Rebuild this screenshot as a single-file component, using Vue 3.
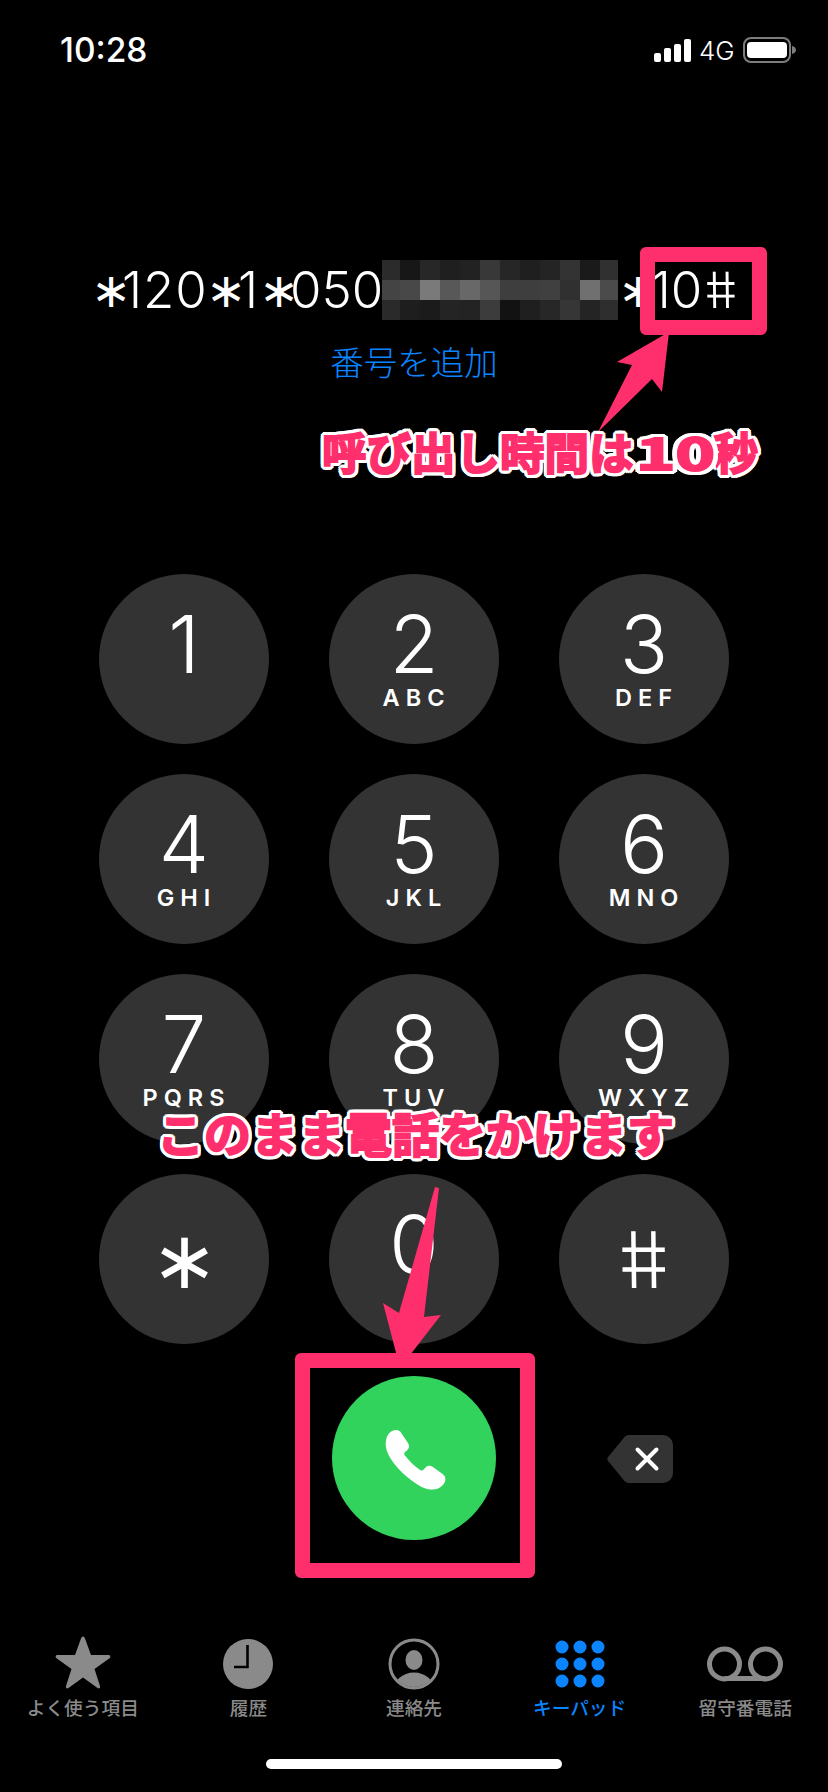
<script setup>
const keys = [
  { d: '1', l: '' }, { d: '2', l: 'ABC' }, { d: '3', l: 'DEF' },
  { d: '4', l: 'GHI' }, { d: '5', l: 'JKL' }, { d: '6', l: 'MNO' },
  { d: '7', l: 'PQRS' }, { d: '8', l: 'TUV' }, { d: '9', l: 'WXYZ' },
]
const mosaic = [
  0x2b, 0x17, 0x27, 0x1f, 0x22, 0x38, 0x26, 0x1f, 0x24, 0x33, 0x1a, 0x30,
  0x44, 0x48, 0x7a, 0x58, 0x68, 0x56, 0x3e, 0x3e, 0x40, 0x30, 0x70, 0x4b,
  0x2a, 0x1e, 0x1b, 0x24, 0x23, 0x3c, 0x12, 0x1f, 0x27, 0x36, 0x24, 0x2e,
].map((v) => `rgb(${v},${v},${v})`)
const dots = []
for (const y of [8, 25, 42]) for (const x of [8, 26, 44]) dots.push({ x, y })
</script>

<template>
  <div class="phone">
    <header class="status">
      <span class="time">10:28</span>
      <div class="status-right">
        <div class="signal">
          <i class="b1"></i><i class="b2"></i><i class="b3"></i><i class="b4"></i>
        </div>
        <span class="net">4G</span>
        <svg class="battery" width="54" height="26" viewBox="0 0 54 26">
          <rect x="1" y="1" width="46" height="24" rx="7" fill="none" stroke="#7d7d7d" stroke-width="2" />
          <rect x="4" y="5" width="40" height="16" rx="4" fill="#fff" />
          <path d="M49 9c2.500 .6 4 2.200 4 4s-1.500 3.400-4 4z" fill="#7d7d7d" />
        </svg>
      </div>
    </header>

    <section class="dial">
      <div class="number">
        <span class="ast">∗</span><span class="run r120">120</span><span class="ast">∗</span><span class="run r1">1</span><span class="ast">∗</span><span class="run r050">050</span>
        <div class="mosaic">
          <i v-for="(c, i) in mosaic" :key="i" :style="{ background: c }"></i>
        </div>
        <span class="ast">∗</span><span class="run r10">10</span><span class="hash">#</span>
      </div>
      <div class="add">番号を追加</div>
    </section>

    <section class="pad">
      <button v-for="k in keys" :key="k.d" class="key">
        <span class="digit">{{ k.d }}</span>
        <span class="letters">{{ k.l }}</span>
      </button>
      <button class="key sym"><span class="sym-ast">∗</span></button>
      <button class="key">
        <span class="digit">0</span>
        <span class="letters"></span>
      </button>
      <button class="key sym"><span class="sym-hash">#</span></button>

      <div class="cell"></div>
      <div class="cell">
        <div class="call">
          <svg width="67" height="67" viewBox="300 250 200 200">
            <path fill="#fff" d="M316 290C322 268 345 258 358 270L380 303C386 312 384 320 378 325L370 332C368 336 370 340 374 344C385 358 400 373 415 383C420 387 424 386 428 382L436 374C442 370 450 372 456 376L484 396C496 405 494 420 484 430C470 446 445 446 420 434C385 416 340 375 322 338C314 322 312 305 316 290Z" />
          </svg>
        </div>
      </div>
      <div class="cell del-cell">
        <svg width="66" height="48" viewBox="0 0 66 48">
          <path fill="#333" d="M22 0H56a10 10 0 0 1 10 10V38a10 10 0 0 1-10 10H22a6 6 0 0 1-4.500-2L1.500 26.500a3.500 3.500 0 0 1 0-5L17.500 2a6 6 0 0 1 4.500-2Z" />
          <path d="M30.500 14.500L49.500 33.500M49.500 14.500L30.500 33.500" stroke="#fff" stroke-width="4" stroke-linecap="round" />
        </svg>
      </div>
    </section>

    <nav class="tabs">
      <div class="tab">
        <svg width="58" height="54" viewBox="0 0 58 54">
          <path fill="#8a8a8a" d="M29 0.500C30 0.500 30.700 1.500 31 2.500L37 19H54.500C56.500 19 57 21 55.500 22.200L40.500 33L46 50C46.600 52 45 53 43.500 52L29 41.500L14.500 52C13 53 11.400 52 12 50L17.500 33L2.500 22.200C1 21 1.500 19 3.500 19H21L27 2.500C27.300 1.500 28 .5 29 .5Z" />
        </svg>
        <span>よく使う項目</span>
      </div>
      <div class="tab">
        <svg width="58" height="54" viewBox="0 0 58 54">
          <circle cx="29" cy="28" r="25" fill="#8a8a8a" />
          <path d="M28.500 9V31H15" fill="none" stroke="#000" stroke-width="2.600" />
        </svg>
        <span>履歴</span>
      </div>
      <div class="tab">
        <svg width="58" height="54" viewBox="0 0 58 54">
          <defs><clipPath id="ring"><circle cx="29" cy="28" r="23" /></clipPath></defs>
          <circle cx="29" cy="28" r="24" fill="none" stroke="#8a8a8a" stroke-width="3" />
          <ellipse cx="29" cy="24" rx="8.500" ry="10" fill="#8a8a8a" />
          <ellipse cx="29" cy="55" rx="21" ry="18.500" fill="#8a8a8a" clip-path="url(#ring)" />
        </svg>
        <span>連絡先</span>
      </div>
      <div class="tab active">
        <svg width="58" height="54" viewBox="0 0 52 54" class="grid-ic">
          <circle v-for="(p, i) in dots" :key="i" :cx="p.x" :cy="p.y + 3" r="6.500" fill="#0a84ff" />
        </svg>
        <span>キーパッド</span>
      </div>
      <div class="tab">
        <svg width="78" height="54" viewBox="0 0 78 54">
          <path d="M18.500 42.500H59.500" stroke="#8a8a8a" stroke-width="5" />
          <circle cx="18.500" cy="28" r="15" fill="none" stroke="#8a8a8a" stroke-width="5" />
          <circle cx="59.500" cy="28" r="15" fill="none" stroke="#8a8a8a" stroke-width="5" />
        </svg>
        <span>留守番電話</span>
      </div>
    </nav>

    <div class="home"></div>

    <svg class="arrows" width="828" height="1792" viewBox="0 0 828 1792">
      <polygon fill="#ff2f6d" points="669,332 617,362 632,365 598,432 652,379 662,392" />
      <polygon fill="#ff2f6d" points="435,1187 439,1188 424,1317 441,1315 400,1368 383,1303 399,1313" />
    </svg>
    <div class="frame frame-top"></div>
    <div class="frame frame-call"></div>
    <div class="note note-top">呼び出し時間は<span class="note-num">10</span>秒</div>
    <div class="note note-call">このまま電話をかけます</div>
  </div>
</template>

<style>
html, body { margin: 0; background: #000; }
</style>

<style scoped>
.phone {
  position: relative;
  width: 828px;
  height: 1792px;
  background: #000;
  color: #fff;
  font-family: Inter, "Noto Sans CJK JP", sans-serif;
  overflow: hidden;
  display: flex;
  flex-direction: column;
}
.status {
  height: 100px;
  box-sizing: border-box;
  padding: 30px 31px 0 60px;
  display: flex;
  justify-content: space-between;
  align-items: flex-start;
}
.time { font-size: 33.500px; line-height: 40px; font-weight: 500; letter-spacing: 0; }
.status-right { display: flex; align-items: center; height: 40px; }
.signal { display: flex; align-items: flex-end; gap: 3px; height: 23px; margin-right: 8px; }
.signal i { width: 7px; background: #fff; border-radius: 2px; display: block; }
.b1 { height: 9px; } .b2 { height: 14px; } .b3 { height: 18px; } .b4 { height: 23px; }
.net { font-size: 26px; font-weight: 300; width: 44px; letter-spacing: 0; }
.dial {
  height: 474px;
  box-sizing: border-box;
  padding-top: 160px;
  display: flex;
  flex-direction: column;
}
.number {
  display: flex;
  align-items: center;
  height: 60px;
  padding-left: 91px;
  font-size: 51px;
  font-weight: 300;
  letter-spacing: 0;
  line-height: 60px;
}
.run { display: block; text-align: center; }
.r120 { width: 84px; letter-spacing: 1px; }
.r1 { width: 22px; }
.r050 { width: 92px; }
.r10 { width: 55px; }
.ast { font-weight: 300; font-size: 48px; letter-spacing: 0; width: 31px; text-align: center; }
.hash { display: inline-block; font-size: 50px; transform: skewX(10deg); margin-left: 1px; }
.mosaic {
  width: 236px;
  height: 60px;
  flex: none;
  display: grid;
  grid-template-columns: 18px repeat(10, 20px) 18px;
  grid-template-rows: repeat(3, 20px);
}
.mosaic i { display: block; }
.add {
  margin-top: 21px;
  text-align: center;
  font-size: 33.500px;
  line-height: 44px;
  color: #0a84ff;
  font-weight: 300;
}
.pad {
  display: grid;
  grid-template-columns: repeat(3, 170px);
  grid-auto-rows: 170px;
  column-gap: 60px;
  row-gap: 30px;
  padding-left: 99px;
}
.key {
  border: none;
  padding: 0;
  margin: 0;
  width: 170px;
  height: 170px;
  border-radius: 50%;
  background: #333;
  color: #fff;
  font-family: inherit;
  display: flex;
  flex-direction: column;
  align-items: center;
  justify-content: flex-start;
}
.digit { font-size: 80px; font-weight: 300; line-height: 94px; margin-top: 23px; height: 94px; }
.letters { font-size: 23.500px; font-weight: 600; letter-spacing: 6px; line-height: 26px; height: 26px; margin-top: -6px; margin-left: 5px; }
.sym { justify-content: center; }
.sym-ast { font-size: 80px; font-weight: 200; line-height: 80px; }
.sym-hash { font-size: 78px; font-weight: 300; transform: skewX(10deg); }
.cell { display: flex; align-items: center; justify-content: center; }
.call {
  width: 164px;
  height: 164px;
  margin-top: -2px;
  border-radius: 50%;
  background: #31d35c;
  display: flex;
  align-items: center;
  justify-content: center;
}
.del-cell { justify-content: flex-start; padding-left: 48px; }
.tabs {
  margin-top: 92px;
  display: grid;
  grid-template-columns: repeat(5, 1fr);
  font-size: 18.700px;
  font-weight: 500;
  color: #8a8a8a;
}
.tab { display: flex; flex-direction: column; align-items: center; }
.tab span { line-height: 24px; margin-top: 7px; }
.tab.active { color: #0a84ff; }
.home {
  margin: 38px auto 0;
  width: 296px;
  height: 10px;
  border-radius: 5px;
  background: #fff;
}
.arrows { position: absolute; left: 0; top: 0; pointer-events: none; }
.frame {
  position: absolute;
  box-sizing: border-box;
  border: 15px solid #ff2f6d;
  border-radius: 6px;
}
.frame-top { left: 640px; top: 247px; width: 127px; height: 88px; }
.frame-call { left: 295px; top: 1353px; width: 240px; height: 225px; }
.note {
  position: absolute;
  white-space: nowrap;
  font-family: "Noto Sans CJK JP", sans-serif;
  font-weight: 700;
  color: #ff2f6d;
  -webkit-text-stroke: 2px #ff2f6d;
  text-shadow:
    4px 0 0 #fff, -4px 0 0 #fff, 0 4px 0 #fff, 0 -4px 0 #fff,
    3px 3px 0 #fff, -3px 3px 0 #fff, 3px -3px 0 #fff, -3px -3px 0 #fff,
    4px 2px 0 #fff, -4px 2px 0 #fff, 4px -2px 0 #fff, -4px -2px 0 #fff,
    2px 4px 0 #fff, -2px 4px 0 #fff, 2px -4px 0 #fff, -2px -4px 0 #fff;
}
.note-top { left: 322px; top: 421px; font-size: 44.500px; line-height: 60px; }
.note-num {
  display: inline-block;
  width: 52px;
  margin: 0 13px 0 15px;
  transform: scaleX(1.500);
  transform-origin: center;
}
.note-call { left: 157px; top: 1102px; font-size: 47px; line-height: 60px; }
</style>
